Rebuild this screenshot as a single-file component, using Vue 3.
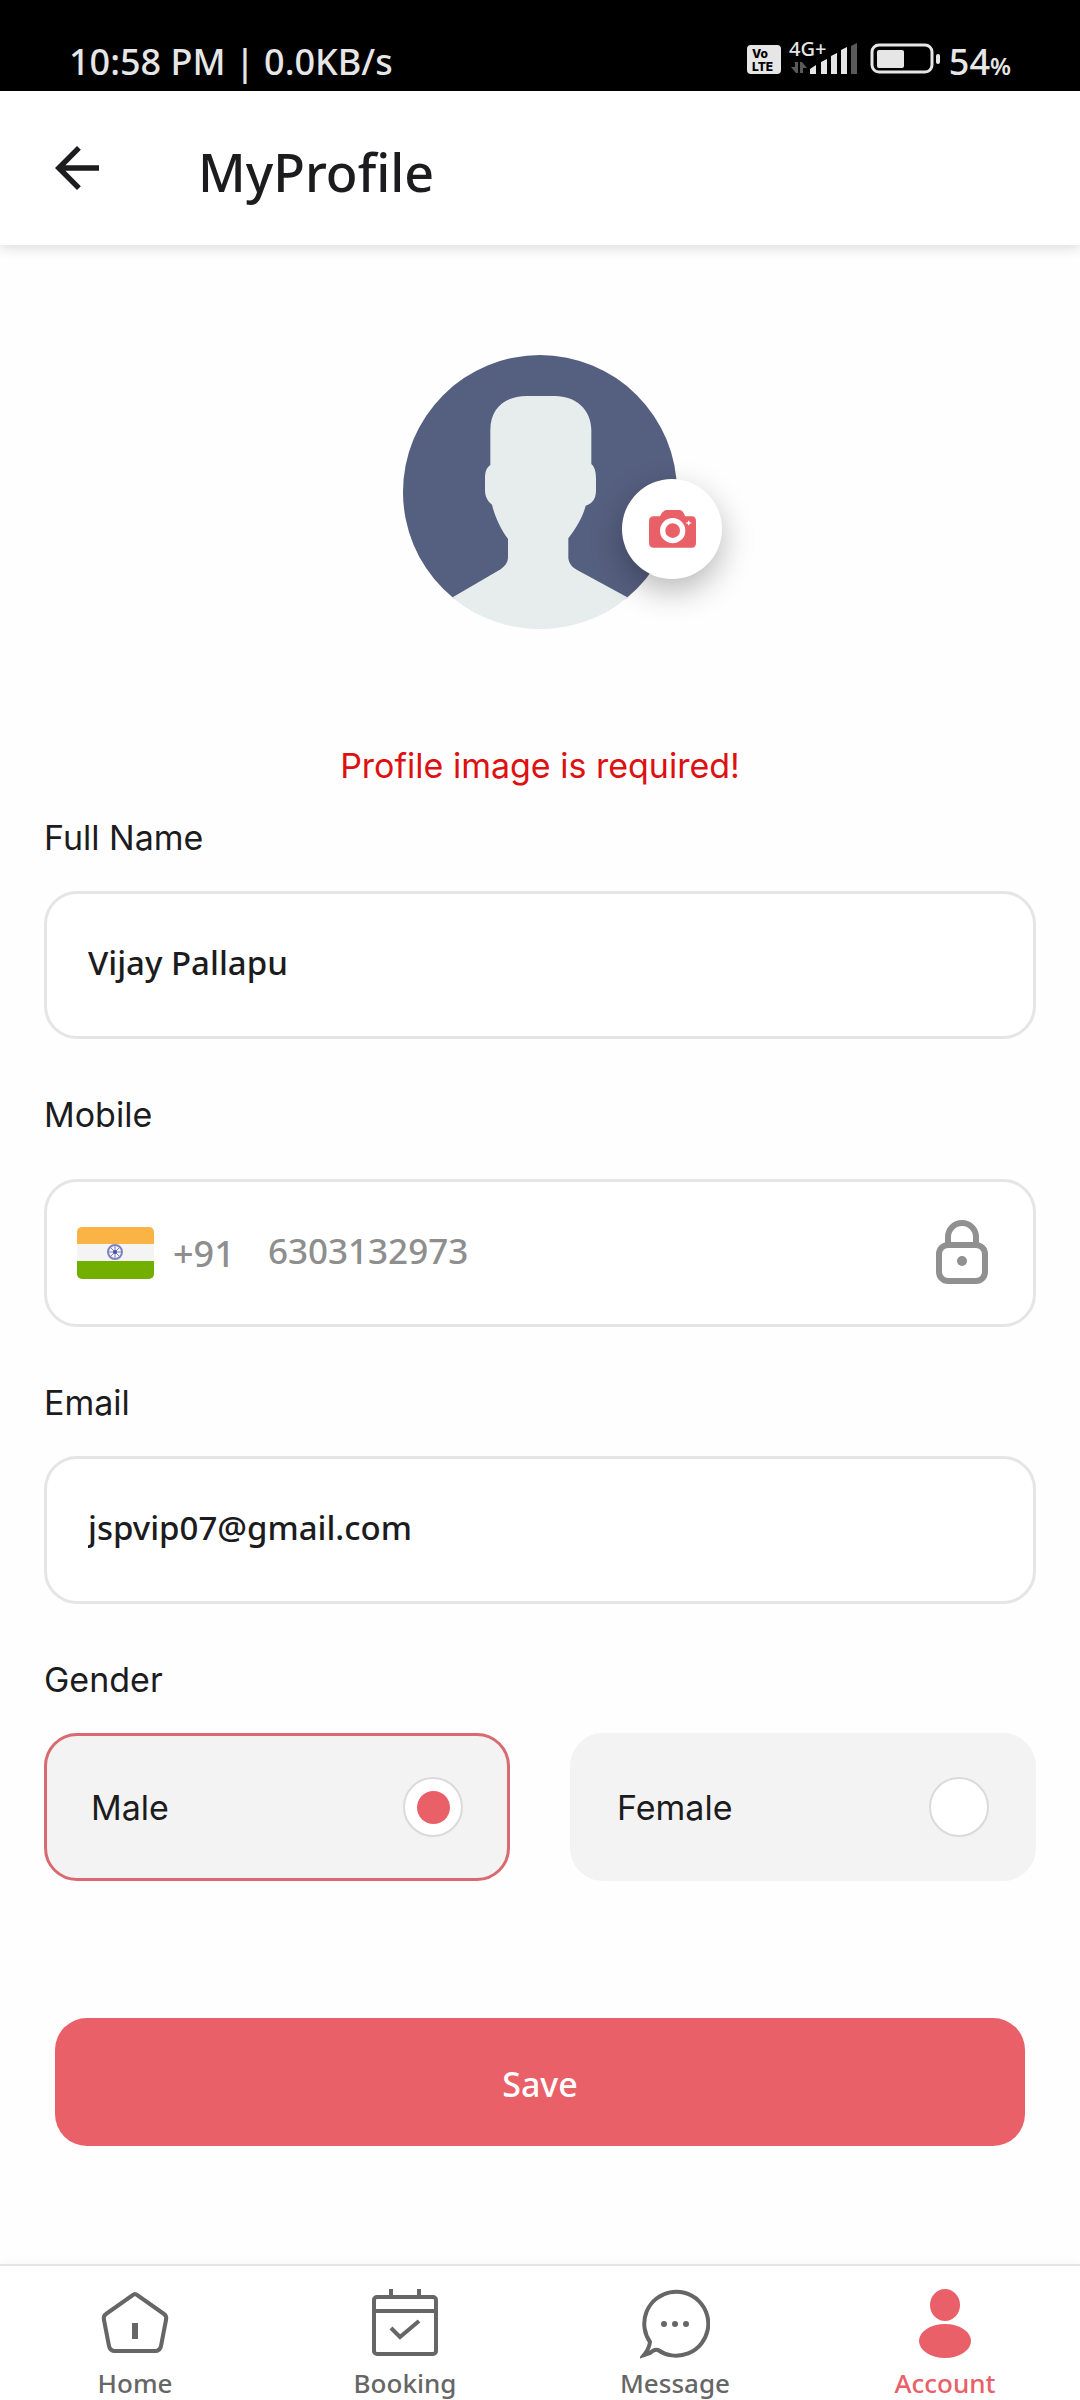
<script setup>
import { ref } from 'vue'

const fullName = ref('Vijay Pallapu')
const mobile = ref('6303132973')
const email = ref('jspvip07@gmail.com')
const gender = ref('Male')
const genders = ['Male', 'Female']
</script>

<template>
  <div class="page">
    <div class="status">
      <span class="status-left">10:58 PM | 0.0KB/s</span>
      <div class="status-right">
        <svg class="volte" width="34" height="29" viewBox="0 0 34 29" aria-hidden="true">
          <rect width="34" height="29" rx="4" fill="#e6e6e6" />
          <text x="5" y="13" font-size="12">Vo</text>
          <text x="5" y="26" font-size="12">LTE</text>
        </svg>
        <svg class="signal" width="69" height="34" viewBox="0 0 69 34" aria-hidden="true">
          <text x="0" y="16" font-size="20" fill="#e6e6e6">4G+</text>
          <path d="M6 22h3v11H7L2 27h4zM11 22h2l5 6h-4v5h-3z" fill="#5a5a5a" />
          <g fill="#e6e6e6">
            <path d="M21 29l6-4v9h-6z" />
            <path d="M32 22l6-3v15h-6z" />
            <path d="M42 16l6-3v21h-6z" />
            <path d="M52 10l6-3v27h-6z" />
          </g>
          <path d="M62 6l6-3v31h-6z" fill="#5a5a5a" />
        </svg>
        <svg class="battery" width="69" height="30" viewBox="0 0 69 30" aria-hidden="true">
          <rect x="1" y="1" width="60" height="27" rx="7" fill="none" stroke="#e6e6e6" stroke-width="3" />
          <rect x="6" y="6" width="27" height="18" rx="2" fill="#e6e6e6" />
          <rect x="65" y="10" width="4" height="10" rx="2" fill="#e6e6e6" />
        </svg>
        <span class="percent">54<small>%</small></span>
      </div>
    </div>

    <header class="header">
      <button class="back" type="button" aria-label="Back">
        <svg width="66" height="66" viewBox="0 0 24 24" aria-hidden="true">
          <path d="M20 11H7.8l5.6-5.6L12 4l-8 8 8 8 1.4-1.4L7.8 13H20z" fill="#1c1c1e" />
        </svg>
      </button>
      <h1 class="title">MyProfile</h1>
    </header>

    <form class="form" @submit.prevent>
      <div class="avatar">
        <svg class="avatar-image" viewBox="69 75 822 822" role="img" aria-label="Profile image">
          <path
            d="M331 405V300C331 232 378 198 440 198H525C588 198 634 240 634 300V402C645 412 648 428 648 445V480C648 507 638 520 617 527C608 562 590 592 565 625V685C567 700 575 711 590 719L742 802L900 860V910H60V860L218 802L362 718C375 708 383 698 384 685V627C360 595 343 555 336 524C323 514 315 500 315 480V445C315 425 320 412 331 405Z"
            fill="#e6edec"
          />
        </svg>
        <button class="camera" type="button" aria-label="Change photo">
          <svg width="48" height="39" viewBox="806 536 144 117" aria-hidden="true">
            <path
              d="M824 555H842C846 548 852 536 862 536H900C910 536 913 546 918 555H937Q950 555 950 570V634Q950 649 937 649H824Q809 649 809 634V570Q809 555 824 555Z"
              fill="#e96068"
            />
            <circle cx="880" cy="598" r="30" fill="#e96068" stroke="#fff" stroke-width="16" />
            <path d="M928 567l3 6 7 2-7 2-3 6-3-6-7-2 7-2z" fill="#fff" />
          </svg>
        </button>
      </div>

      <p class="error" role="alert">Profile image is required!</p>

      <div class="field">
        <label class="label" for="full-name">Full Name</label>
        <input id="full-name" v-model="fullName" class="box text-input" type="text" />
      </div>

      <div class="field field-mobile">
        <label class="label" for="mobile">Mobile</label>
        <div class="box phone">
          <svg class="flag" width="77" height="52" viewBox="0 0 77 52" aria-hidden="true">
            <clipPath id="flag-clip"><rect width="77" height="52" rx="5" /></clipPath>
            <g clip-path="url(#flag-clip)">
              <rect width="77" height="52" fill="#f4f4f4" />
              <rect width="77" height="17" fill="#fab446" />
              <rect y="34" width="77" height="18" fill="#73af00" />
            </g>
            <g fill="none" stroke="#7d84c4">
              <circle cx="38" cy="25" r="7" stroke-width="2" />
              <path d="M38 18v14M31 25h14M33 20l10 10M43 20l-10 10" />
            </g>
            <circle cx="38" cy="25" r="2" fill="#4a52a8" />
          </svg>
          <span class="dial">+91</span>
          <input id="mobile" v-model="mobile" class="phone-input" type="tel" readonly />
          <svg class="lock" width="54" height="66" viewBox="0 0 54 66" aria-hidden="true">
            <g fill="none" stroke="#909090" stroke-width="6">
              <path d="M13 25V17a14 14 0 0 1 28 0v8" />
              <rect x="4" y="25" width="46" height="36" rx="9" />
            </g>
            <circle cx="27" cy="41" r="5" fill="#909090" />
          </svg>
        </div>
      </div>

      <div class="field">
        <label class="label" for="email">Email</label>
        <input id="email" v-model="email" class="box text-input" type="email" />
      </div>

      <fieldset class="field genders">
        <legend class="label">Gender</legend>
        <div class="options">
          <label v-for="g in genders" :key="g" class="option" :class="{ selected: gender === g }">
            <span>{{ g }}</span>
            <input v-model="gender" class="radio" type="radio" name="gender" :value="g" />
          </label>
        </div>
      </fieldset>

      <button class="save" type="submit">Save</button>
    </form>

    <nav class="nav" aria-label="Main">
      <a class="tab" href="#home">
        <svg class="tab-icon" viewBox="0 0 70 70" aria-hidden="true">
          <g fill="none" stroke="currentColor" stroke-width="4">
            <path d="M33 6Q35 4 37 6L64 25Q67 27 66 31L61 57Q60 62 55 62H15Q10 62 9 57L4 31Q3 27 6 25Z" />
            <path d="M35 34v16" stroke-width="6" />
          </g>
        </svg>
        <span>Home</span>
      </a>
      <a class="tab" href="#booking">
        <svg class="tab-icon" viewBox="0 0 70 70" aria-hidden="true">
          <g fill="none" stroke="currentColor" stroke-width="4">
            <rect x="4" y="8" width="62" height="57" rx="3" />
            <path d="M4 22h62M21 0v8M49 0v8" />
            <path d="M21 39l9 9 19-16" />
          </g>
        </svg>
        <span>Booking</span>
      </a>
      <a class="tab" href="#message">
        <svg class="tab-icon" viewBox="0 0 70 70" aria-hidden="true">
          <path
            d="M10 53A32 32 0 1 1 18 61Q14 60 10 64L4 66Q9 60 10 53Z"
            fill="none"
            stroke="currentColor"
            stroke-width="4"
          />
          <g fill="currentColor">
            <circle cx="24" cy="35" r="3" />
            <circle cx="35" cy="35" r="3" />
            <circle cx="46" cy="35" r="3" />
          </g>
        </svg>
        <span>Message</span>
      </a>
      <a class="tab active" href="#account" aria-current="page">
        <svg class="tab-icon" viewBox="0 0 70 70" aria-hidden="true">
          <ellipse cx="35" cy="16" rx="15" ry="16" fill="currentColor" />
          <ellipse cx="35" cy="52" rx="26" ry="17" fill="currentColor" />
        </svg>
        <span>Account</span>
      </a>
    </nav>
  </div>
</template>

<style>
body {
  margin: 0;
  background: #fefefe;
}
</style>

<style scoped>
.page {
  display: flex;
  flex-direction: column;
  min-height: 100vh;
  color: #1c1c1e;
  font-family: "Noto Sans", sans-serif;
  font-weight: 500;
}

.page *,
.page {
  box-sizing: border-box;
}

button {
  padding: 0;
  border: 0;
  background: none;
  font: inherit;
  color: inherit;
}

.status {
  display: flex;
  justify-content: space-between;
  padding: 37px 69px 4px;
  background: #000;
  color: #e6e6e6;
  font-size: 36px;
  line-height: 50px;
}

.status-right {
  display: flex;
  align-items: flex-end;
}

.status-right svg {
  margin-bottom: 13px;
  overflow: visible;
}

.volte text {
  fill: #000;
  font-family: "Inter", sans-serif;
  font-weight: 800;
}

.signal {
  margin-left: 8px;
}

.battery {
  margin-left: 13px;
}

.percent {
  margin-left: 9px;
}

.percent small {
  font-size: 24px;
  font-weight: 600;
  line-height: 24px;
}

.header {
  position: relative;
  display: flex;
  align-items: center;
  gap: 88px;
  height: 154px;
  padding: 0 44px;
  background: #fff;
  box-shadow: 0 3px 12px rgba(0, 0, 0, 0.14);
}

.back svg {
  display: block;
}

.title {
  margin: 0;
  padding-top: 8px;
  font-size: 52px;
  font-weight: 500;
  line-height: 72px;
}

.form {
  flex: 1;
  display: flex;
  flex-direction: column;
  padding: 110px 44px 116px;
}

.avatar {
  position: relative;
  align-self: center;
  width: 274px;
  height: 274px;
}

.avatar-image {
  display: block;
  width: 100%;
  height: 100%;
  border-radius: 50%;
  background: linear-gradient(#555f7f 89%, #e6edec 89%);
}

.camera {
  position: absolute;
  right: -45px;
  bottom: 50px;
  display: grid;
  place-items: center;
  width: 100px;
  height: 100px;
  border-radius: 50%;
  background: #fff;
  box-shadow: 0 12px 32px rgba(0, 0, 0, 0.28);
}

.error {
  margin: 117px 0 32px;
  color: #dd1111;
  font-family: "Inter", sans-serif;
  font-size: 34px;
  font-weight: 400;
  line-height: 40px;
  text-align: center;
}

.field {
  display: flex;
  flex-direction: column;
  gap: 33px;
  margin: 0 0 56px;
}

.field-mobile {
  gap: 44px;
}

.label {
  padding: 0;
  font-family: "Inter", sans-serif;
  font-size: 34px;
  font-weight: 400;
  line-height: 40px;
}

.box {
  width: 100%;
  height: 148px;
  border: 3px solid #e5e5e5;
  border-radius: 33px;
  background: #fff;
}

.text-input {
  padding: 0 41px 6px;
  color: inherit;
  font: inherit;
  font-size: 33px;
}

.phone {
  display: flex;
  align-items: center;
  gap: 19px;
  padding: 0 44px 0 30px;
  color: #8e8e8e;
}

.dial {
  min-width: 76px;
  font-size: 36px;
}

.phone-input {
  flex: 1;
  min-width: 0;
  padding: 0 0 6px;
  border: 0;
  background: none;
  color: inherit;
  font: inherit;
  font-size: 35px;
}

.genders {
  display: block;
  min-width: 0;
  padding: 0;
  border: 0;
}

.options {
  display: flex;
  gap: 60px;
  margin-top: 33px;
}

.option {
  flex: 1;
  display: flex;
  align-items: center;
  justify-content: space-between;
  height: 148px;
  padding: 0 44px;
  border: 3px solid #f3f3f3;
  border-radius: 33px;
  background: #f3f3f3;
  font-family: "Inter", sans-serif;
  font-size: 34px;
  font-weight: 400;
}

.option.selected {
  border-color: #d96a71;
}

.radio {
  appearance: none;
  display: grid;
  place-content: center;
  width: 60px;
  height: 60px;
  margin: 0;
  border: 2px solid #dadada;
  border-radius: 50%;
  background: #fff;
}

.radio:checked::before {
  content: "";
  width: 33px;
  height: 33px;
  border-radius: 50%;
  background: #e96068;
}

.save {
  height: 128px;
  margin: 81px 11px 0;
  padding-top: 4px;
  border-radius: 32px;
  background: #e96068;
  color: #fff;
  font-size: 34px;
}

.nav {
  display: flex;
  padding-top: 23px;
  border-top: 2px solid #e4e4e4;
  background: #fff;
  box-shadow: 0 -2px 8px rgba(0, 0, 0, 0.03);
}

.tab {
  flex: 1;
  display: flex;
  flex-direction: column;
  align-items: center;
  gap: 7px;
  color: #666;
  font-size: 26px;
  line-height: 34px;
  text-decoration: none;
}

.tab-icon {
  width: 70px;
  height: 70px;
}

.tab.active {
  color: #e96068;
}
</style>
